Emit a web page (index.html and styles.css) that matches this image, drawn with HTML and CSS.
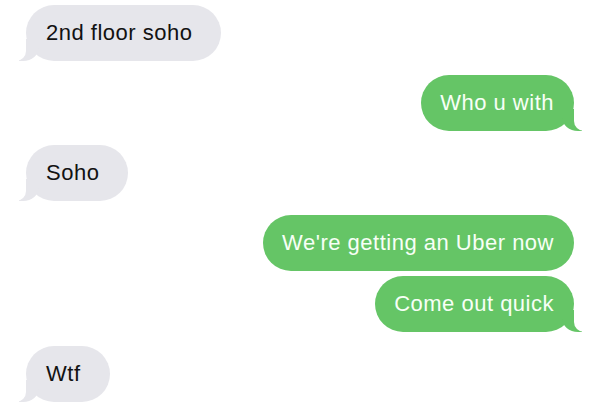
FILE: index.html
```html
<!DOCTYPE html>
<html lang="en">
<head>
<meta charset="utf-8">
<title>Messages</title>
<link rel="stylesheet" href="styles.css">
</head>
<body>
<div class="thread">
  <div class="group in-group">
    <div class="msg in tail">2nd floor soho</div>
  </div>
  <div class="group out-group">
    <div class="msg out tail">Who u with</div>
  </div>
  <div class="group in-group">
    <div class="msg in tail">Soho</div>
  </div>
  <div class="group out-group">
    <div class="msg out">We're getting an Uber now</div>
    <div class="msg out tail">Come out quick</div>
  </div>
  <div class="group in-group">
    <div class="msg in tail">Wtf</div>
  </div>
</div>
</body>
</html>
```

FILE: styles.css
```css
html, body {
  margin: 0;
  padding: 0;
  background: #ffffff;
}

body {
  font-family: "Liberation Sans", Arial, sans-serif;
  overflow: hidden;
}

.thread {
  display: flex;
  flex-direction: column;
  gap: 14px;
  padding: 5px 26px 0 26px;
}

.group {
  display: flex;
  flex-direction: column;
  gap: 5px;
}

.in-group {
  align-items: flex-start;
}

.out-group {
  align-items: flex-end;
}

.msg {
  position: relative;
  height: 56px;
  line-height: 56px;
  font-size: 22px;
  letter-spacing: 0.5px;
  border-radius: 28px;
  white-space: nowrap;
}

.in {
  background: #e6e6eb;
  color: #121212;
  padding: 0 29px 0 20px;
}

.out {
  background: #65c566;
  color: #f7fff6;
  padding: 0 20px 0 19px;
}

.tail::before,
.tail::after {
  content: "";
  position: absolute;
  bottom: 0;
  height: 22px;
}

.in.tail::before {
  left: -7px;
  width: 20px;
  background: #e6e6eb;
  border-bottom-right-radius: 16px 14px;
}

.in.tail::after {
  left: -10px;
  width: 10px;
  background: #ffffff;
  border-bottom-right-radius: 10px;
}

.out.tail::before {
  right: -8px;
  width: 20px;
  background: #65c566;
  border-bottom-left-radius: 16px 14px;
}

.out.tail::after {
  right: -10px;
  width: 10px;
  background: #ffffff;
  border-bottom-left-radius: 10px;
}
```
